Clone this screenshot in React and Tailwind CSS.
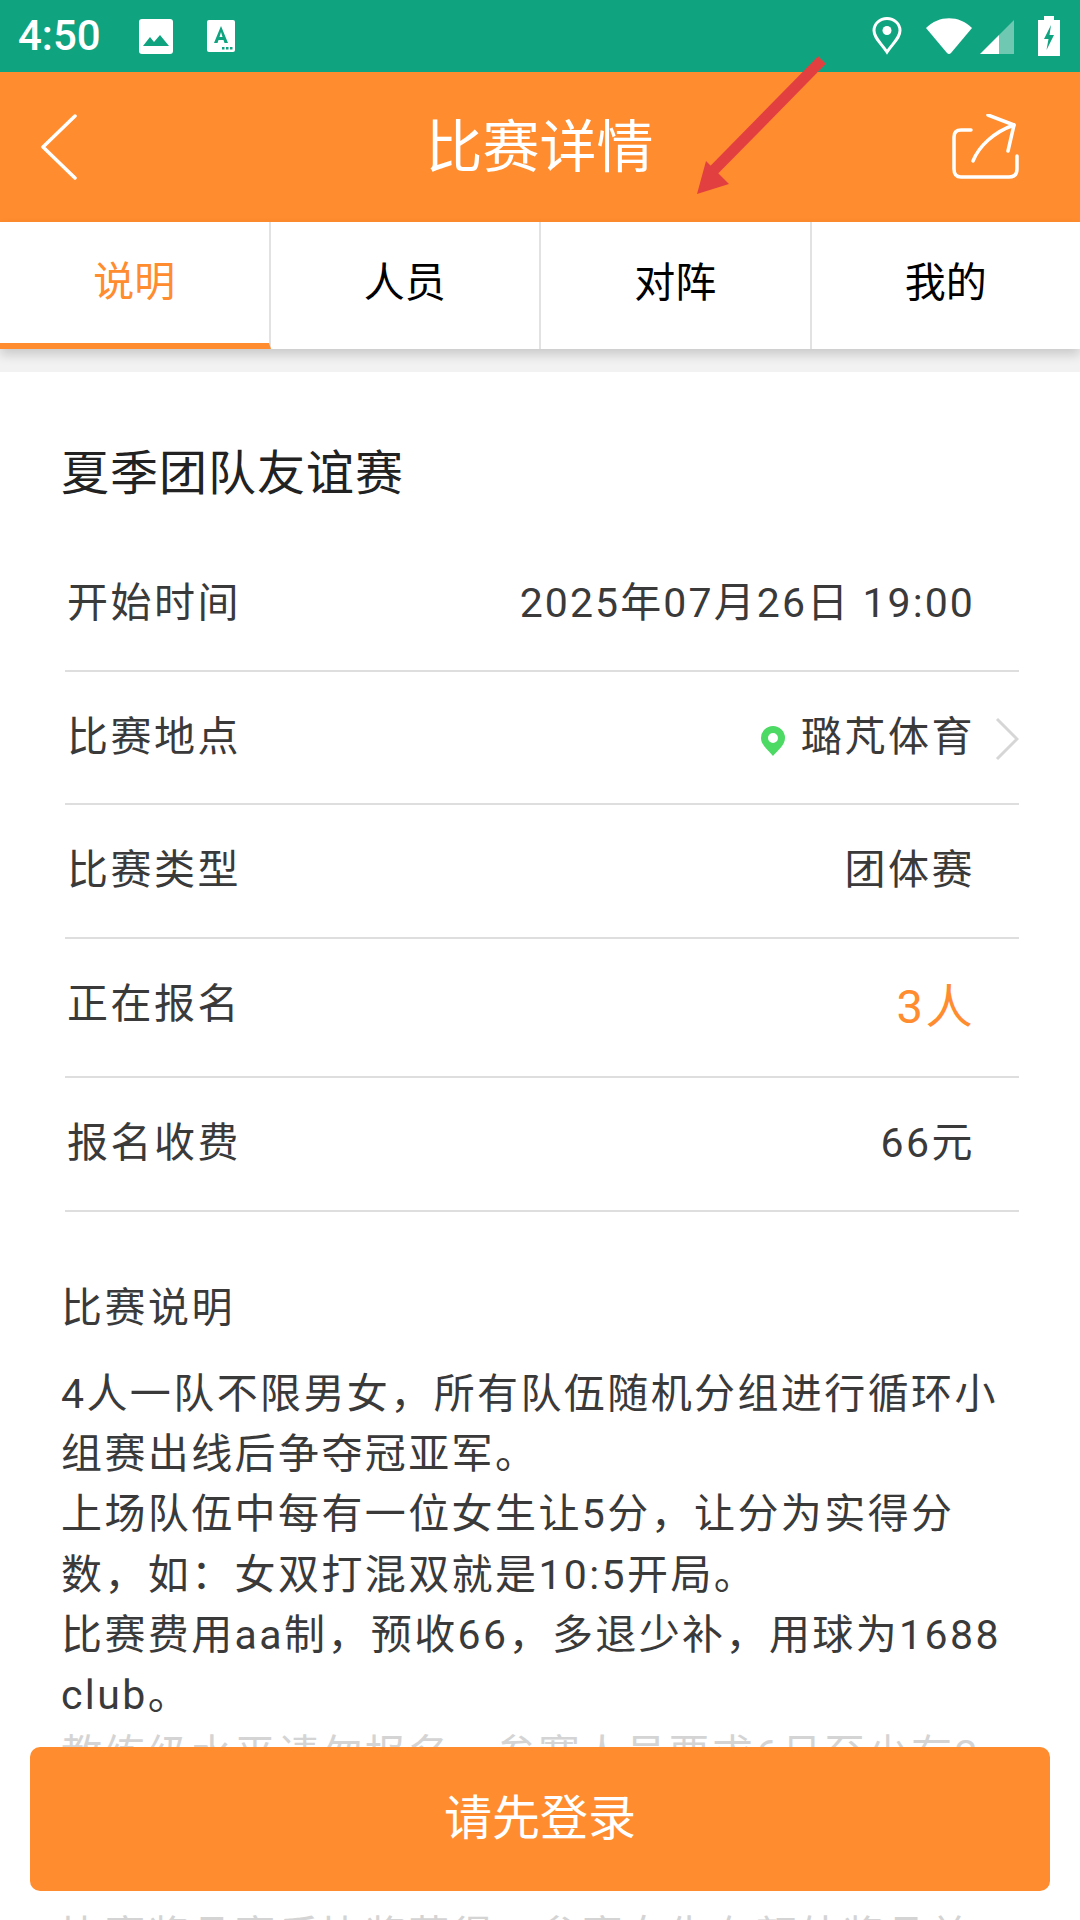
import React from 'react';

const font = { fontFamily: '"Roboto", "Noto Sans CJK SC", sans-serif' };

const rows = [
  { label: '开始时间', value: '2025年07月26日 19:00', h: 'h-[134px]', tight: true },
  { label: '比赛地点', value: '璐芃体育', h: 'h-[133px]', place: true },
  { label: '比赛类型', value: '团体赛', h: 'h-[134px]' },
  { label: '正在报名', value: '3人', h: 'h-[139px]', accent: true },
  { label: '报名收费', value: '66元', h: 'h-[134px]' },
];

const tabs = ['说明', '人员', '对阵', '我的'];

const lines = [
  '4人一队不限男女，所有队伍随机分组进行循环小',
  '组赛出线后争夺冠亚军。',
  '上场队伍中每有一位女生让5分，让分为实得分',
  '数，如：女双打混双就是10:5开局。',
  '比赛费用aa制，预收66，多退少补，用球为1688',
  'club。',
];

function StatusBar() {
  return (
    <div className="h-[72px] bg-[#10a37f] flex items-center pl-[18px] pr-[20px] text-white">
      <span className="text-[42px] font-medium leading-none mr-[38px]">4:50</span>
      <svg width="34" height="35" viewBox="0 0 34 35" className="mr-[34px]">
        <rect width="34" height="35" rx="3" fill="#fff" />
        <path d="M4 27 L11 18 L15 23 L21 16 L30 27 Z" fill="#10a37f" />
      </svg>
      <svg width="28" height="32" viewBox="0 0 28 32">
        <rect width="28" height="32" rx="2" fill="#fff" />
        <path d="M14 6 L21 23 H17.5 L16.5 20 H11.5 L10.5 23 H7 Z M14 12 L12.5 17 H15.5 Z" fill="#10a37f" />
        <rect x="15" y="27" width="2.5" height="2.5" fill="#10a37f" />
        <rect x="19" y="27" width="2.5" height="2.5" fill="#10a37f" />
        <rect x="23" y="27" width="2.5" height="2.5" fill="#10a37f" />
      </svg>
      <div className="ml-auto flex items-center">
        <svg width="30" height="38" viewBox="0 0 30 38" className="mr-[24px]">
          <path d="M15 35 C9 26 2 21 2 13.5 A13 12 0 0 1 28 13.5 C28 21 21 26 15 35 Z" fill="none" stroke="#fff" strokeWidth="3" />
          <circle cx="15" cy="13.5" r="4.5" fill="#fff" />
        </svg>
        <svg width="46" height="37" viewBox="0 0 46 37" className="mr-[8px]">
          <path d="M0 10 C13 -3 33 -3 46 10 L25 35 Q23 37 21 35 Z" fill="#fff" />
        </svg>
        <svg width="34" height="35" viewBox="0 0 34 35" className="mr-[24px]">
          <path d="M0 35 L19 16 V35 Z" fill="#fff" />
          <path d="M19 16 L34 1 V35 H19 Z" fill="#fff" fillOpacity="0.4" />
        </svg>
        <svg width="22" height="40" viewBox="0 0 22 40">
          <path d="M6 0 H16 V4 H22 V40 H0 V4 H6 Z" fill="#fff" />
          <path d="M13 9 L6 23 H10.5 L8.5 34 L16 19 H11.5 Z" fill="#10a37f" />
        </svg>
      </div>
    </div>
  );
}

function Header() {
  return (
    <div className="h-[150px] bg-[#ff8c2e] flex items-center pl-[40px] pr-[60px] text-white">
      <div className="w-[100px] flex">
        <svg width="38" height="66" viewBox="0 0 38 66" fill="none" stroke="#fff" strokeWidth="3.5" strokeLinecap="round" strokeLinejoin="round">
          <path d="M35 2 L3 33 L35 64" />
        </svg>
      </div>
      <span className="flex-1 text-center text-[57px] leading-none ml-[19px]">比赛详情</span>
      <div className="w-[100px] flex justify-end">
        <svg width="68" height="66" viewBox="0 0 68 66" fill="none" stroke="#fff" strokeWidth="3.5" strokeLinecap="round" strokeLinejoin="round">
          <path d="M19 16 H9 Q2 16 2 23 V55 Q2 63 9 63 H57 Q65 63 65 55 V42" />
          <path d="M21 47 C27 32 42 18 62 11" />
          <path d="M36 1 L62 11 L56 37" />
        </svg>
      </div>
    </div>
  );
}

function Tabs() {
  return (
    <div className="relative z-10 h-[127px] bg-white flex shadow-[0_6px_10px_rgba(0,0,0,0.16)]">
      {tabs.map((t, i) => (
        <div
          key={t}
          className={`flex-1 flex items-center justify-center text-[41px] border-r-2 border-[#e2e2e2] last:border-r-0 ${
            i === 0 ? 'text-[#ff8c2e] border-b-[6px] border-b-[#ff8c2e]' : 'text-black pb-[3px]'
          }`}
        >
          {t}
        </div>
      ))}
    </div>
  );
}

function InfoRow({ row }) {
  return (
    <div className={`${row.h} flex items-center border-b-2 border-[#dedede] pl-[2px] text-[#3a3a3a] text-[41px]`}>
      <span className={`tracking-[2.5px] ${row.accent ? 'mb-[5px]' : ''}`}>{row.label}</span>
      <span
        className={`ml-auto mr-[44px] flex items-center ${row.tight ? 'tracking-[2.1px]' : 'tracking-[2.5px]'} ${
          row.accent ? 'text-[#ff8c2e] text-[47px]' : ''
        }`}
      >
        {row.place && (
          <svg width="24" height="30" viewBox="0 0 24 30" className="mr-[16px] mt-[6px]">
            <path d="M12 30 C7 24 0 19 0 12 A12 12 0 0 1 24 12 C24 19 17 24 12 30 Z M12 7 A5 5 0 1 0 12 17 A5 5 0 1 0 12 7 Z" fill="#4cd964" fillRule="evenodd" />
          </svg>
        )}
        {row.value}
      </span>
      {row.place && (
        <svg width="24" height="44" viewBox="0 0 24 44" fill="none" stroke="#d6d6d6" strokeWidth="3" className="-ml-[24px] mt-[2px]">
          <path d="M2 2 L22 22 L2 42" />
        </svg>
      )}
    </div>
  );
}

export default function App() {
  return (
    <div className="relative w-[1080px] h-[1920px] overflow-hidden bg-white" style={font}>
      <StatusBar />
      <Header />
      <Tabs />
      <div className="h-[23px] bg-[#f2f2f2]" />
      <div className="px-[61px] pt-[78px]">
        <h1 className="text-[48px] leading-[48px] font-normal text-[#222] tracking-[1px]">夏季团队友谊赛</h1>
        <div className="mt-[40px] ml-[4px]">
          {rows.map((r) => (
            <InfoRow key={r.label} row={r} />
          ))}
        </div>
        <div className="mt-[72px] text-[41px] leading-[48px] text-[#3a3a3a] tracking-[2.5px]">比赛说明</div>
        <div className="mt-[32px] text-[41px] leading-[60.2px] text-[#3a3a3a] whitespace-nowrap tracking-[2.4px]">
          {lines.map((l) => (
            <div key={l}>{l}</div>
          ))}
          <div className="text-[#d4d4d4]">教练级水平请勿报名，参赛人员要求6月至少有2</div>
          <div className="h-[120.4px]" />
          <div className="text-[#d4d4d4]">比赛奖品赛后比奖获得，参赛女生有额外奖品兑</div>
        </div>
      </div>
      <div className="absolute z-20 left-[30px] right-[30px] top-[1747px] h-[144px] rounded-[10px] bg-[#ff8c2e] flex items-center justify-center text-white text-[48px]">
        请先登录
      </div>
      <svg className="absolute z-30 left-0 top-0 pointer-events-none" width="1080" height="200" viewBox="0 0 1080 200">
        <path d="M822 60 L712 172" stroke="#e24040" strokeWidth="11" />
        <path d="M697 194 L706 161 L729 184 Z" fill="#e24040" />
      </svg>
    </div>
  );
}
